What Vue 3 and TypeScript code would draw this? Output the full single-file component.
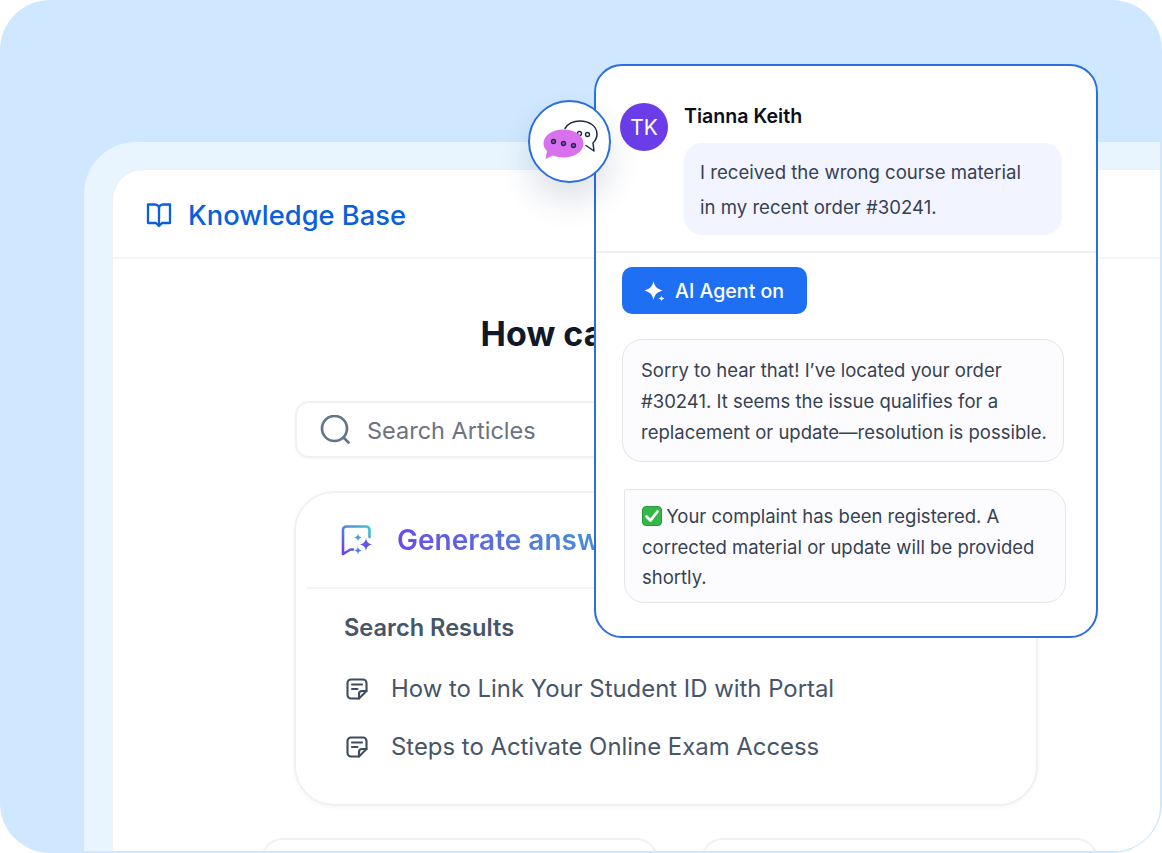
<script setup lang="ts">
const results: string[] = [
  'How to Link Your Student ID with Portal',
  'Steps to Activate Online Exam Access',
]
</script>

<template>
  <div class="stage">
    <div class="shell">
      <div class="kb">
        <header class="kb-head">
          <svg class="book" viewBox="0 0 26 26" fill="none" stroke="#0a5fdc" stroke-width="2.300" stroke-linejoin="round" stroke-linecap="round">
            <path d="M2 2.500h7c2.200 0 4 1.800 4 4 0-2.200 1.800-4 4-4h7v18.500h-8l-3 3-3-3H2Z" />
            <path d="M13 6.500V23" />
          </svg>
          <span class="kb-title">Knowledge Base</span>
        </header>
        <main class="kb-body">
          <h1 class="headline">How can we help you?</h1>
          <div class="search">
            <svg class="search-icon" viewBox="0 0 30 30" fill="none" stroke="#64748b" stroke-width="2.700" stroke-linecap="round">
              <circle cx="14.500" cy="13.500" r="12.500" />
              <path d="M24 23l4.500 4.500" />
            </svg>
            <span class="search-text">Search Articles</span>
          </div>
          <section class="card">
            <div class="generate">
              <svg class="gen-icon" viewBox="0 0 32 32" fill="none">
                <defs>
                  <linearGradient id="genGrad" x1="0" y1="1" x2="1" y2="0">
                    <stop offset="0" stop-color="#6a3de8" />
                    <stop offset="1" stop-color="#3fc8d2" />
                  </linearGradient>
                </defs>
                <path d="M28.500 13V6a3.500 3.500 0 0 0-3.500-3.500H5.500A3.500 3.500 0 0 0 2 6v24l7.500-4.500H12" stroke="url(#genGrad)" stroke-width="2.600" stroke-linecap="round" stroke-linejoin="round" />
                <path d="M25 14c.8 4.200 2.300 5.700 6.500 6.500-4.200.8-5.700 2.300-6.500 6.500-.8-4.200-2.300-5.700-6.500-6.500 4.200-.8 5.700-2.300 6.500-6.500Z" fill="#6258e6" />
                <path d="M17 9.500c.5 2.700 1.300 3.500 4 4-2.700.5-3.500 1.300-4 4-.5-2.700-1.300-3.500-4-4 2.700-.5 3.500-1.300 4-4Z" fill="#3fa4d8" />
                <path d="M17 22.500c.5 2.700 1.300 3.500 4 4-2.700.5-3.500 1.300-4 4-.5-2.700-1.300-3.500-4-4 2.700-.5 3.500-1.300 4-4Z" fill="#4a86e0" />
              </svg>
              <span class="gen-text">Generate answer with AI</span>
            </div>
            <div class="results">
              <h2 class="results-title">Search Results</h2>
              <ul class="result-list">
                <li v-for="item in results" :key="item" class="result">
                  <svg class="doc" viewBox="0 0 22 22" fill="none" stroke="#3f4b5e" stroke-width="2.100" stroke-linecap="round" stroke-linejoin="round">
                    <path d="M13 20.500H5a3.500 3.500 0 0 1-3.500-3.500V5A3.500 3.500 0 0 1 5 1.500h12A3.500 3.500 0 0 1 20.500 5v8L13 20.500Z" />
                    <path d="M13 20.500V16a3 3 0 0 1 3-3h4.500" />
                    <path d="M6 6.500h10M6 11h5.500" />
                  </svg>
                  <span>{{ item }}</span>
                </li>
              </ul>
            </div>
          </section>
          <div class="bottom-cards">
            <div class="mini"></div>
            <div class="mini"></div>
          </div>
        </main>
      </div>
    </div>

    <aside class="chat">
      <div class="customer">
        <div class="avatar">TK</div>
        <div class="customer-col">
          <div class="name">Tianna Keith</div>
          <div class="cust-bubble">I received the wrong course material in my recent order #30241.</div>
        </div>
      </div>
      <div class="agent">
        <div class="ai-pill">
          <svg class="spark" viewBox="0 0 24 24" fill="#fff">
            <path d="M10.500 2C11.600 7.400 14 9.900 19.500 11.500 14 13.100 11.600 15.600 10.500 21 9.400 15.600 7 13.100 1.500 11.500 7 9.900 9.400 7.400 10.500 2Z" />
            <path d="M18.500 16.500c.4 1.800 1 2.600 3 3-2 .4-2.600 1.200-3 3-.4-1.800-1-2.600-3-3 2-.4 2.600-1.200 3-3Z" />
          </svg>
          <span>AI Agent on</span>
        </div>
        <div class="msg msg-one">Sorry to hear that! I’ve located your order #30241. It seems the issue qualifies for a replacement or update—resolution is possible.</div>
        <div class="msg msg-two">
          <svg class="check" viewBox="0 0 20 20">
            <rect x="0.500" y="0.500" width="19" height="19" rx="3.500" fill="#35b84a" stroke="#2a9a3c" stroke-width="1" />
            <path d="M4.500 10.500l4 4 7-9" fill="none" stroke="#fff" stroke-width="2.800" stroke-linecap="round" stroke-linejoin="round" />
          </svg>
          Your complaint has been registered. A corrected material or update will be provided shortly.
        </div>
      </div>
    </aside>

    <div class="bubble-badge">
      <svg viewBox="0 0 56 44" class="bubbles">
        <path d="M23 8.500C26 3.500 32 1 38 1c9 0 17 5 17 13 0 4-1.500 6.500-4 9l1 8-8-5.500" fill="#fff" stroke="#1e2a44" stroke-width="1.500" stroke-linecap="round" stroke-linejoin="round" />
        <circle cx="37.500" cy="13.500" r="2" fill="none" stroke="#1e2a44" stroke-width="1.400" />
        <circle cx="45.500" cy="14.500" r="2" fill="none" stroke="#1e2a44" stroke-width="1.400" />
        <path d="M21.500 9.500c11 0 20 6 20 14 0 8-9 14-20 14-4 0-7.500-.7-10.500-2L3.500 39l1.500-8C3 29 1.500 26.500 1.500 23.500c0-8 9-14 20-14Z" fill="#d871ee" />
        <circle cx="11.500" cy="21.500" r="2" fill="#8a50d8" stroke="#1e2a44" stroke-width="1.400" />
        <circle cx="21.500" cy="23.500" r="2" fill="#8a50d8" stroke="#1e2a44" stroke-width="1.400" />
        <circle cx="31.500" cy="25.500" r="2" fill="#8a50d8" stroke="#1e2a44" stroke-width="1.400" />
      </svg>
    </div>
  </div>
</template>

<style scoped>
* { box-sizing: border-box; }

.stage {
  position: relative;
  width: 1162px;
  height: 853px;
  padding: 142px 2px 2px 84px;
  background: #cfe8ff;
  border-radius: 50px;
  overflow: hidden;
  font-family: Inter, "Noto Sans", sans-serif;
}

.shell {
  height: 100%;
  padding: 28px 0 0 29px;
  background: #e8f5ff;
  border-radius: 52px 0 46px 0;
  overflow: hidden;
}

.kb {
  height: 100%;
  background: #fff;
  border-radius: 30px 0 0 0;
  box-shadow: -1px -1px 0 #eef0f4;
  overflow: hidden;
}

.kb-head {
  display: flex;
  align-items: center;
  gap: 16px;
  height: 89px;
  padding: 3px 0 0 33px;
  border-bottom: 2px solid #f3f4f6;
}

.book { width: 26px; height: 26px; }

.kb-title {
  font-size: 27.300px;
  font-weight: 500;
  color: #0a5fdc;
}

.kb-body {
  width: 924px;
  padding-top: 53px;
  margin-left: 181px;
}

.headline {
  margin: 0;
  width: 743px;
  text-align: center;
  font-size: 34px;
  line-height: 44px;
  font-weight: 700;
  color: #111827;
}

.search {
  display: flex;
  align-items: center;
  gap: 17px;
  width: 742px;
  height: 57px;
  margin: 45px 0 33px 1px;
  padding: 1px 0 0 23px;
  border: 2px solid #f0f1f4;
  border-radius: 14px;
  box-shadow: 0 1px 3px rgba(17, 24, 39, 0.04);
}

.search-icon { width: 30px; height: 30px; }

.search-text {
  font-size: 23.500px;
  color: #6b7280;
}

.card {
  width: 744px;
  height: 315px;
  border: 2px solid #f0f1f4;
  border-radius: 40px;
  box-shadow: 0 2px 4px rgba(17, 24, 39, 0.03);
}

.generate {
  display: flex;
  align-items: center;
  gap: 24px;
  height: 96px;
  margin: 0 10px;
  padding: 0 0 1px 35px;
  border-bottom: 2px solid #f1f3f6;
}

.gen-icon { width: 32px; height: 32px; }

.gen-text {
  font-size: 28px;
  font-weight: 600;
  background: linear-gradient(90deg, #6a4de8, #4b8ad6 55%, #4b8ad6);
  -webkit-background-clip: text;
  background-clip: text;
  color: transparent;
}

.results { padding: 24px 0 0 47px; }

.results-title {
  margin: 0 0 28px 1px;
  font-size: 23.600px;
  line-height: 30px;
  font-weight: 600;
  color: #475569;
}

.result-list {
  display: flex;
  flex-direction: column;
  gap: 23px;
  margin: 0;
  padding: 0;
  list-style: none;
}

.result {
  display: flex;
  align-items: center;
  gap: 23px;
  height: 35px;
  font-size: 23.900px;
  color: #475569;
}

.doc { width: 22px; height: 22px; margin-left: 3px; }

.bottom-cards {
  display: flex;
  gap: 43px;
  width: 837px;
  margin: 32px 0 0 -33px;
}

.mini {
  flex: 1;
  height: 60px;
  border: 2px solid #f0f1f4;
  border-radius: 22px;
}

/* floating conversation panel */
.chat {
  position: absolute;
  left: 594px;
  top: 64px;
  width: 504px;
  height: 574px;
  background: #fff;
  border: 2px solid #2b6fdc;
  border-radius: 28px;
}

.customer {
  display: flex;
  gap: 16px;
  height: 187px;
  padding: 37px 0 0 24px;
  border-bottom: 2px solid #eef0f3;
}

.avatar {
  display: flex;
  align-items: center;
  justify-content: center;
  width: 48px;
  height: 48px;
  border-radius: 50%;
  background: #6a3de8;
  color: #fff;
  font-size: 21px;
}

.name {
  font-size: 19.600px;
  line-height: 26px;
  font-weight: 600;
  color: #0b0f19;
}

.cust-bubble {
  width: 378px;
  height: 92px;
  margin-top: 14px;
  padding: 12px 30px 0 16px;
  border-radius: 18px;
  background: #f2f5ff;
  font-size: 18.600px;
  line-height: 34.500px;
  color: #374151;
}

.agent { padding: 14px 0 0 26px; }

.ai-pill {
  display: flex;
  align-items: center;
  gap: 8px;
  width: 185px;
  height: 47px;
  padding-left: 21px;
  border-radius: 10px;
  background: #1f6ff5;
  color: #fff;
  font-size: 19.600px;
  font-weight: 500;
}

.spark { width: 24px; height: 24px; }

.msg {
  width: 442px;
  border: 1.500px solid #e3e5e9;
  background: #fcfcff;
  font-size: 18.500px;
  color: #374151;
}

.msg-one {
  height: 123px;
  margin-top: 25px;
  padding: 15px 6px 0 18px;
  border-radius: 20px;
  line-height: 31px;
}

.msg-two {
  height: 114px;
  margin: 27px 0 0 2px;
  padding: 11px 6px 0 17px;
  border-radius: 2px 20px 20px 20px;
  line-height: 30.500px;
}

.check {
  width: 20px;
  height: 20px;
  vertical-align: -3px;
  margin-right: -1px;
}

.bubble-badge {
  position: absolute;
  left: 528px;
  top: 100px;
  display: flex;
  align-items: center;
  justify-content: center;
  width: 83px;
  height: 83px;
  border: 2.500px solid #2b6fdc;
  border-radius: 50%;
  background: #fff;
  box-shadow: 0 18px 32px rgba(30, 50, 90, 0.14);
}

.bubbles {
  width: 56px;
  height: 44px;
}
</style>

<style>
html, body { background: #fff; }
</style>
